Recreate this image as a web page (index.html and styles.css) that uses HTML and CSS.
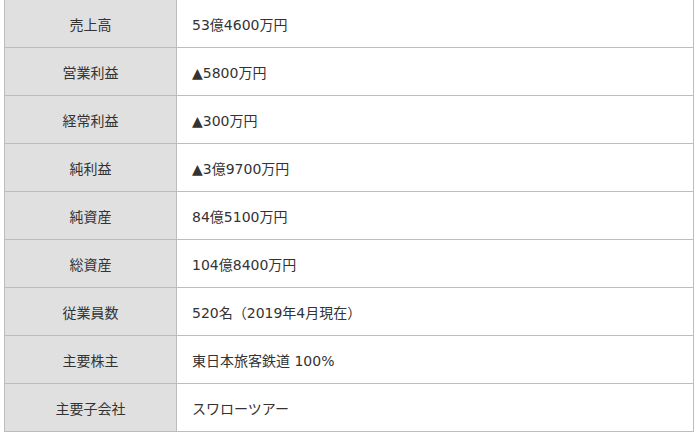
FILE: index.html
```html
<!DOCTYPE html>
<html lang="ja">
<head>
<meta charset="utf-8">
<link rel="stylesheet" href="styles.css">
</head>
<body>
<table class="outline">
  <tbody>
    <tr><th>売上高</th><td>53億4600万円</td></tr>
    <tr><th>営業利益</th><td>▲5800万円</td></tr>
    <tr><th>経常利益</th><td>▲300万円</td></tr>
    <tr><th>純利益</th><td>▲3億9700万円</td></tr>
    <tr><th>純資産</th><td>84億5100万円</td></tr>
    <tr><th>総資産</th><td>104億8400万円</td></tr>
    <tr><th>従業員数</th><td>520名（2019年4月現在）</td></tr>
    <tr><th>主要株主</th><td>東日本旅客鉄道 100%</td></tr>
    <tr><th>主要子会社</th><td>スワローツアー</td></tr>
  </tbody>
</table>
</body>
</html>
```
FILE: styles.css
```css
html, body {
  margin: 0;
  padding: 0;
  background: #fff;
}
body {
  font-family: "DejaVu Sans", "Noto Sans CJK JP", sans-serif;
  font-size: 14px;
  color: #333;
}
.outline {
  border-collapse: collapse;
  width: 690px;
  margin: -1px 0 0 4px;
}
.outline th,
.outline td {
  border: 1px solid #bdbdbd;
  height: 48px;
  padding: 0 15px;
  vertical-align: middle;
  box-sizing: border-box;
}
.outline th {
  width: 172px;
  background: #e0e0e0;
  font-weight: normal;
  text-align: center;
}
.outline td {
  text-align: left;
  background: #fff;
}
```
